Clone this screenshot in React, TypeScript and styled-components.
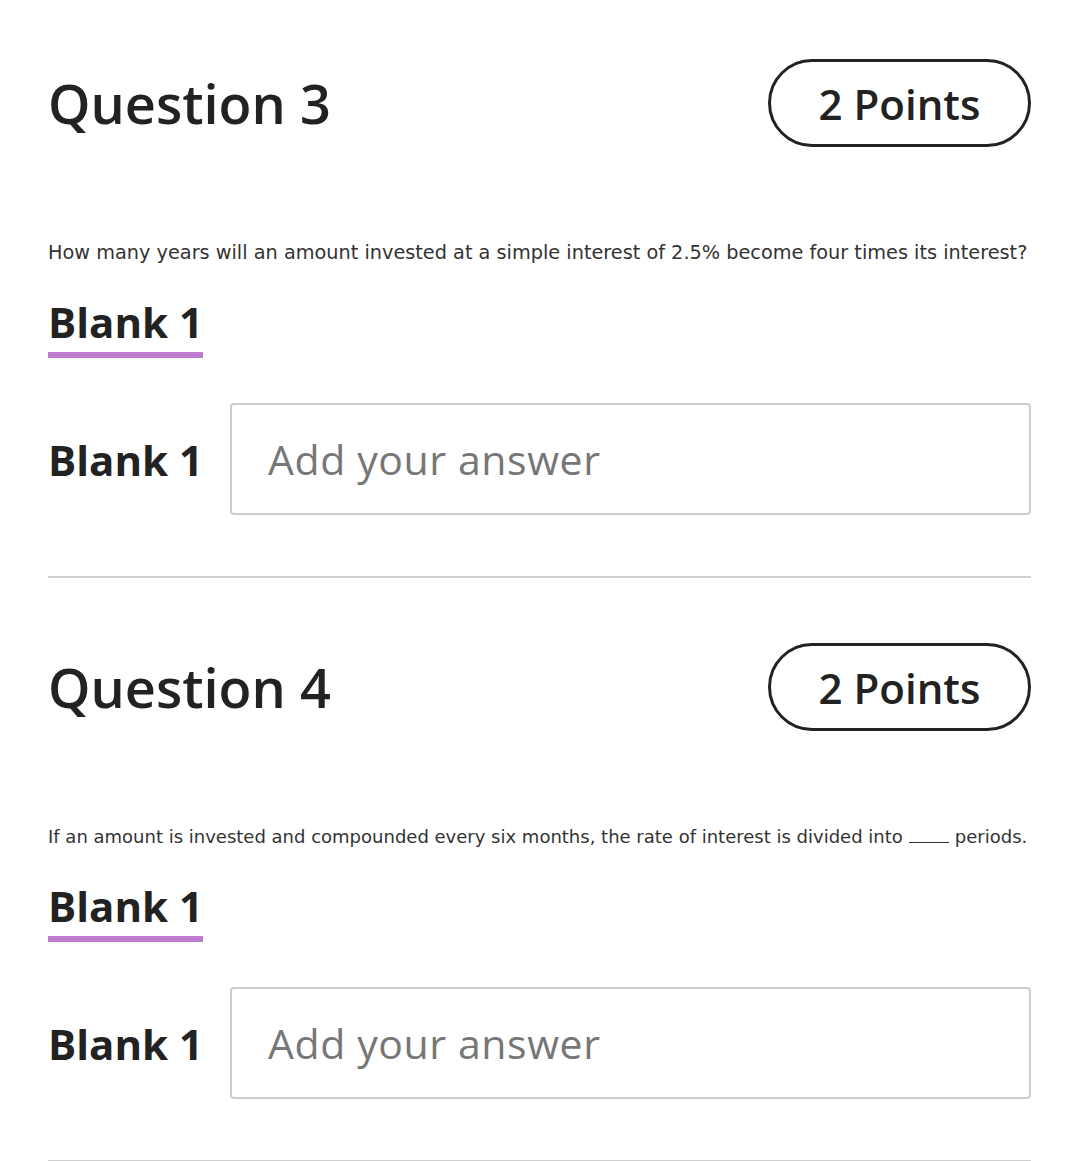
import React from "react";
import styled, { createGlobalStyle } from "styled-components";

const Global = createGlobalStyle`
  html, body { margin: 0; padding: 0; background: #ffffff; }
  body { font-family: "Open Sans", "Noto Sans", sans-serif; color: #222222; }
`;

const Page = styled.div`
  padding: 59px 49px 0 48px;
`;

const Section = styled.section`
  display: flex;
  flex-direction: column;
`;

const Header = styled.div`
  display: flex;
  justify-content: space-between;
  align-items: center;
  height: 88px;
`;

const Title = styled.h2`
  margin: 0;
  font-family: "Open Sans", sans-serif;
  font-weight: 600;
  font-size: 54px;
  color: #222222;
  line-height: 1;
`;

const Pill = styled.div`
  box-sizing: border-box;
  width: 263px;
  height: 88px;
  border: 3px solid #222222;
  border-radius: 44px;
  display: flex;
  align-items: center;
  justify-content: center;
  font-family: "Open Sans", sans-serif;
  font-weight: 600;
  font-size: 42px;
  color: #222222;
`;

const Prompt = styled.p<{ $size: number }>`
  margin: 91px 0 0 0;
  font-family: "DejaVu Sans", sans-serif;
  font-size: ${(p) => p.$size}px;
  line-height: 30px;
  color: #333333;
  white-space: nowrap;
`;

const BlankGap = styled.span`
  display: inline-block;
  width: 40px;
  margin: 0 6px;
  border-bottom: 1px solid #333333;
  vertical-align: baseline;
`;

const BlankTab = styled.div`
  align-self: flex-start;
  margin-top: 29px;
  padding: 0 0 5px 0;
  font-family: "Open Sans", sans-serif;
  font-weight: 700;
  font-size: 42px;
  line-height: 50px;
  color: #222222;
  border-bottom: 6px solid #c17bce;
  min-width: 155px;
`;

const AnswerRow = styled.div`
  display: flex;
  align-items: center;
  gap: 27px;
  margin-top: 45px;
`;

const AnswerLabel = styled.label`
  font-family: "Open Sans", sans-serif;
  font-weight: 700;
  font-size: 42px;
  color: #222222;
  white-space: nowrap;
`;

const AnswerInput = styled.input`
  flex: 1;
  box-sizing: border-box;
  height: 112px;
  border: 2px solid #cccccc;
  border-radius: 4px;
  padding: 0 0 0 36px;
  font-family: "Open Sans", sans-serif;
  font-weight: 400;
  font-size: 41px;
  letter-spacing: 0.6px;
  color: #222222;
  outline: none;
  &::placeholder { color: #767676; }
`;

const Divider = styled.hr`
  margin: 61px 0 0 0;
  border: none;
  height: 2px;
  background: #cfcfcf;
`;

const Spacer = styled.div`
  height: 65px;
`;

type Q = { n: number; size: number; text: React.ReactNode };

const questions: Q[] = [
  {
    n: 3,
    size: 19.3,
    text: "How many years will an amount invested at a simple interest of 2.5% become four times its interest?",
  },
  {
    n: 4,
    size: 18,
    text: (
      <>
        If an amount is invested and compounded every six months, the rate of interest is divided into
        <BlankGap />
        periods.
      </>
    ),
  },
];

export default function App() {
  return (
    <>
      <Global />
      <Page>
        {questions.map((q, i) => (
          <React.Fragment key={q.n}>
            {i > 0 && <Spacer />}
            <Section>
              <Header>
                <Title>Question {q.n}</Title>
                <Pill>2 Points</Pill>
              </Header>
              <Prompt $size={q.size}>{q.text}</Prompt>
              <BlankTab>Blank 1</BlankTab>
              <AnswerRow>
                <AnswerLabel>Blank 1</AnswerLabel>
                <AnswerInput placeholder="Add your answer" />
              </AnswerRow>
              <Divider />
            </Section>
          </React.Fragment>
        ))}
      </Page>
    </>
  );
}
